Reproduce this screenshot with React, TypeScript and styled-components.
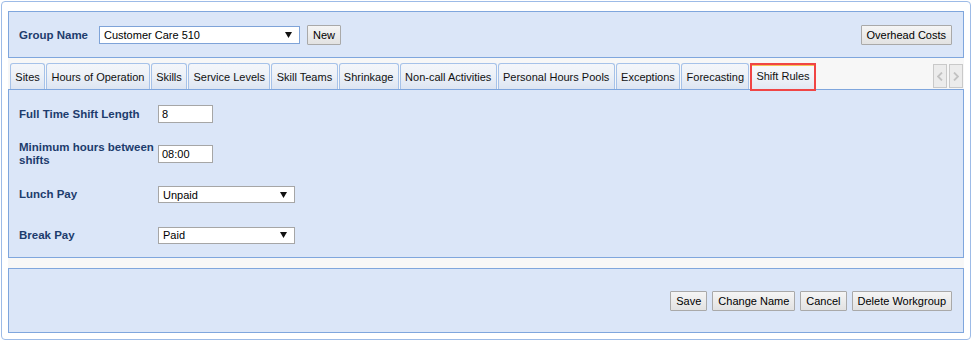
import React from 'react';
import styled, { createGlobalStyle } from 'styled-components';

const Global = createGlobalStyle`
  html, body { margin: 0; padding: 0; background: #ffffff; }
  body { font-family: "Liberation Sans", Arial, sans-serif; }
  * { box-sizing: border-box; }
`;

const Frame = styled.div`
  margin: 1px 0 0 1px;
  width: 970px;
  height: 339px;
  border: 1px solid #9dbbe7;
  border-radius: 4px;
  padding: 9px 6px 6px 6px;
  background: #ffffff;
`;

const Inner = styled.div`
  height: 100%;
  background: #f7f7f7;
  display: flex;
  flex-direction: column;
`;

const Panel = styled.div<{ $h: number }>`
  height: ${p => p.$h}px;
  border: 1px solid #7fa6dd;
  background: #dbe6f8;
`;

const TopPanel = styled(Panel)`
  display: flex;
  align-items: center;
  padding: 0 11px 0 10px;
`;

const GroupLabel = styled.span`
  width: 80px;
  font-size: 11.5px;
  font-weight: bold;
  color: #1d3c6d;
`;

const Button = styled.button`
  height: 20px;
  padding: 0 5px;
  border: 1px solid #a9a9a9;
  border-radius: 1px;
  background: linear-gradient(#f5f5f5, #e2e2e2);
  font-family: "Liberation Sans", Arial, sans-serif;
  font-size: 11px;
  color: #000;
  white-space: nowrap;
`;

const SelectBox = styled.div<{ $w: number; $h: number; $blue?: boolean }>`
  width: ${p => p.$w}px;
  height: ${p => p.$h}px;
  border: 1px solid ${p => (p.$blue ? '#7ea3d8' : '#a6a6a6')};
  background: #ffffff;
  display: flex;
  align-items: center;
  justify-content: space-between;
  padding: 0 7px 0 4px;
  font-size: 11px;
  color: #000;
`;

const Arrow = () => (
  <svg width="7" height="6" viewBox="0 0 7 6">
    <polygon points="0,0 7,0 3.5,6" fill="#111" />
  </svg>
);

const Spacer = styled.div`
  flex: 1;
`;

const TabStrip = styled.div`
  height: 31px;
  display: flex;
  align-items: flex-end;
  gap: 1px;
  padding: 0 1px 0 2px;
  position: relative;
  z-index: 1;
`;

const Tab = styled.div<{ $active?: boolean }>`
  height: 26px;
  padding: 0 4.35px;
  display: flex;
  align-items: center;
  font-size: 11px;
  color: #111;
  white-space: nowrap;
  border: 1px solid #a6c2e9;
  border-bottom: none;
  border-radius: 3px 3px 0 0;
  background: linear-gradient(#f4f6fa 0%, #eef2f8 40%, #dde5f2 100%);
  ${p =>
    p.$active &&
    `
    height: 28px;
    margin-bottom: -2px;
    border: 2px solid #f04545;
    border-radius: 0;
    padding: 0 4px 2px 4px;
    background: linear-gradient(#f8f9fc 0%, #f1f4f9 45%, #e2e8f3 100%);
    box-shadow: inset 0 1px 0 #f5c35a;
  `}
`;

const NavGroup = styled.div`
  margin-left: auto;
  display: flex;
  gap: 2px;
  align-self: flex-end;
  margin-bottom: 1px;
`;

const NavBtn = styled.div`
  width: 14px;
  height: 24px;
  border: 1px solid #c9c9c9;
  background: #ececec;
  display: flex;
  align-items: center;
  justify-content: center;
`;

const Chevron = ({ dir }: { dir: 'l' | 'r' }) => (
  <svg width="6" height="9" viewBox="0 0 6 9">
    <polyline
      points={dir === 'l' ? '5,0.5 1,4.5 5,8.5' : '1,0.5 5,4.5 1,8.5'}
      fill="none"
      stroke="#c2c2c2"
      strokeWidth="1.8"
    />
  </svg>
);

const ContentPanel = styled(Panel)`
  padding: 4px 10px 0 10px;
`;

const FormRow = styled.div<{ $h: number }>`
  height: ${p => p.$h}px;
  display: flex;
  align-items: center;
`;

const FieldLabel = styled.div`
  width: 139px;
  font-size: 11.5px;
  font-weight: bold;
  color: #1d3c6d;
  line-height: 13px;
`;

const TextInput = styled.div<{ $w: number }>`
  width: ${p => p.$w}px;
  height: 18px;
  border: 1px solid #a6a6a6;
  background: #ffffff;
  padding-left: 3px;
  display: flex;
  align-items: center;
  font-size: 11px;
  color: #000;
`;

const BottomPanel = styled(Panel)`
  margin-top: 10px;
  display: flex;
  align-items: center;
  justify-content: flex-end;
  gap: 5px;
  padding: 0 11px 0 0;
`;

const tabs = [
  'Sites',
  'Hours of Operation',
  'Skills',
  'Service Levels',
  'Skill Teams',
  'Shrinkage',
  'Non-call Activities',
  'Personal Hours Pools',
  'Exceptions',
  'Forecasting',
  'Shift Rules',
];

export default function App() {
  return (
    <>
      <Global />
      <Frame>
        <Inner>
          <TopPanel $h={47}>
            <GroupLabel>Group Name</GroupLabel>
            <SelectBox $w={201} $h={18} $blue>
              <span>Customer Care 510</span>
              <Arrow />
            </SelectBox>
            <Button style={{ marginLeft: 7 }}>New</Button>
            <Spacer />
            <Button>Overhead Costs</Button>
          </TopPanel>
          <TabStrip>
            {tabs.map(t => (
              <Tab key={t} $active={t === 'Shift Rules'}>
                {t}
              </Tab>
            ))}
            <NavGroup>
              <NavBtn>
                <Chevron dir="l" />
              </NavBtn>
              <NavBtn>
                <Chevron dir="r" />
              </NavBtn>
            </NavGroup>
          </TabStrip>
          <ContentPanel $h={169}>
            <FormRow $h={40}>
              <FieldLabel>Full Time Shift Length</FieldLabel>
              <TextInput $w={55}>8</TextInput>
            </FormRow>
            <FormRow $h={40}>
              <FieldLabel>Minimum hours between shifts</FieldLabel>
              <TextInput $w={55}>08:00</TextInput>
            </FormRow>
            <FormRow $h={41}>
              <FieldLabel>Lunch Pay</FieldLabel>
              <SelectBox $w={137} $h={17}>
                <span>Unpaid</span>
                <Arrow />
              </SelectBox>
            </FormRow>
            <FormRow $h={40}>
              <FieldLabel>Break Pay</FieldLabel>
              <SelectBox $w={137} $h={17}>
                <span>Paid</span>
                <Arrow />
              </SelectBox>
            </FormRow>
          </ContentPanel>
          <BottomPanel $h={65}>
            <Button>Save</Button>
            <Button>Change Name</Button>
            <Button>Cancel</Button>
            <Button>Delete Workgroup</Button>
          </BottomPanel>
        </Inner>
      </Frame>
    </>
  );
}
